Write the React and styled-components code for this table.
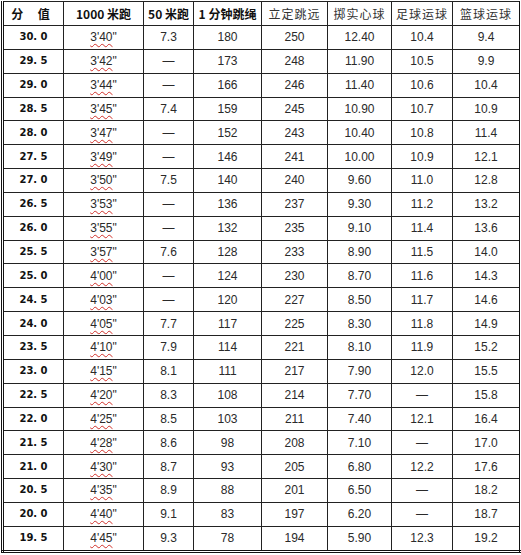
import React from "react";
import styled, { createGlobalStyle } from "styled-components";

const Global = createGlobalStyle`
  html, body { margin: 0; padding: 0; background: #fff; }
  body { font-family: "Liberation Sans", Arial, sans-serif; }
`;

const Page = styled.div`
  width: 521px;
  height: 555px;
  padding: 1px 0 0 1px;
  box-sizing: border-box;
  background: #fff;
  overflow: hidden;
`;

const Table = styled.table`
  border-collapse: collapse;
  table-layout: fixed;
  width: 518px;
  border: 3px double #111;
  border-top: 1px solid #111;
`;

const Col = styled.col`
  width: ${(p) => p.$w}px;
`;

const HeadCell = styled.th`
  height: 23px;
  padding: 0;
  border: 1px solid #222;
  font-family: "Noto Sans CJK SC", sans-serif;
  font-size: 12px;
  line-height: 14px;
  font-weight: ${(p) => (p.$strong ? 700 : 400)};
  color: ${(p) => (p.$strong ? "#111" : "#333")};
  text-align: center;
  white-space: nowrap;
  letter-spacing: ${(p) => p.$ls || 0}px;
`;

const Cell = styled.td`
  height: 22.85px;
  padding: 0;
  border: 1px solid #222;
  text-align: center;
  font-family: "Liberation Sans", Arial, sans-serif;
  font-size: 12px;
  line-height: 14px;
  color: #2a2a2a;
  white-space: nowrap;
`;

const ScoreCell = styled(Cell)`
  font-family: "DejaVu Sans", sans-serif;
  font-weight: 700;
  font-size: 10px;
  color: #111;
`;

const Wavy = styled.span`
  text-decoration: underline wavy #d0302a;
  text-decoration-thickness: 1px;
  text-underline-offset: 2px;
`;

const widths = [61, 80, 50, 68, 66, 64, 61, 68];

const headers = [
  { t: "分 值", s: true, ls: 6 },
  { t: "1000 米跑", s: true },
  { t: "50 米跑", s: true },
  { t: "1 分钟跳绳", s: true },
  { t: "立定跳远", ls: 1 },
  { t: "掷实心球", ls: 1 },
  { t: "足球运球", ls: 1 },
  { t: "篮球运球", ls: 1 },
];

const D = "—";
const rows = [
  ["30.0", "3'40", "7.3", "180", "250", "12.40", "10.4", "9.4"],
  ["29.5", "3'42", D, "173", "248", "11.90", "10.5", "9.9"],
  ["29.0", "3'44", D, "166", "246", "11.40", "10.6", "10.4"],
  ["28.5", "3'45", "7.4", "159", "245", "10.90", "10.7", "10.9"],
  ["28.0", "3'47", D, "152", "243", "10.40", "10.8", "11.4"],
  ["27.5", "3'49", D, "146", "241", "10.00", "10.9", "12.1"],
  ["27.0", "3'50", "7.5", "140", "240", "9.60", "11.0", "12.8"],
  ["26.5", "3'53", D, "136", "237", "9.30", "11.2", "13.2"],
  ["26.0", "3'55", D, "132", "235", "9.10", "11.4", "13.6"],
  ["25.5", "3'57", "7.6", "128", "233", "8.90", "11.5", "14.0"],
  ["25.0", "4'00", D, "124", "230", "8.70", "11.6", "14.3"],
  ["24.5", "4'03", D, "120", "227", "8.50", "11.7", "14.6"],
  ["24.0", "4'05", "7.7", "117", "225", "8.30", "11.8", "14.9"],
  ["23.5", "4'10", "7.9", "114", "221", "8.10", "11.9", "15.2"],
  ["23.0", "4'15", "8.1", "111", "217", "7.90", "12.0", "15.5"],
  ["22.5", "4'20", "8.3", "108", "214", "7.70", D, "15.8"],
  ["22.0", "4'25", "8.5", "103", "211", "7.40", "12.1", "16.4"],
  ["21.5", "4'28", "8.6", "98", "208", "7.10", D, "17.0"],
  ["21.0", "4'30", "8.7", "93", "205", "6.80", "12.2", "17.6"],
  ["20.5", "4'35", "8.9", "88", "201", "6.50", D, "18.2"],
  ["20.0", "4'40", "9.1", "83", "197", "6.20", D, "18.7"],
  ["19.5", "4'45", "9.3", "78", "194", "5.90", "12.3", "19.2"],
];

const fmtScore = (s) => s.replace(".", ". ");

export default function App() {
  return (
    <Page>
      <Global />
      <Table>
        <colgroup>
          {widths.map((w, i) => (
            <Col key={i} $w={w} />
          ))}
        </colgroup>
        <thead>
          <tr>
            {headers.map((h, i) => (
              <HeadCell key={i} $strong={h.s} $ls={h.ls}>
                {h.t}
              </HeadCell>
            ))}
          </tr>
        </thead>
        <tbody>
          {rows.map((r) => (
            <tr key={r[0]}>
              <ScoreCell>{fmtScore(r[0])}</ScoreCell>
              <Cell>
                <Wavy>{r[1]}</Wavy>"
              </Cell>
              {r.slice(2).map((v, j) => (
                <Cell key={j}>{v}</Cell>
              ))}
            </tr>
          ))}
        </tbody>
      </Table>
    </Page>
  );
}
